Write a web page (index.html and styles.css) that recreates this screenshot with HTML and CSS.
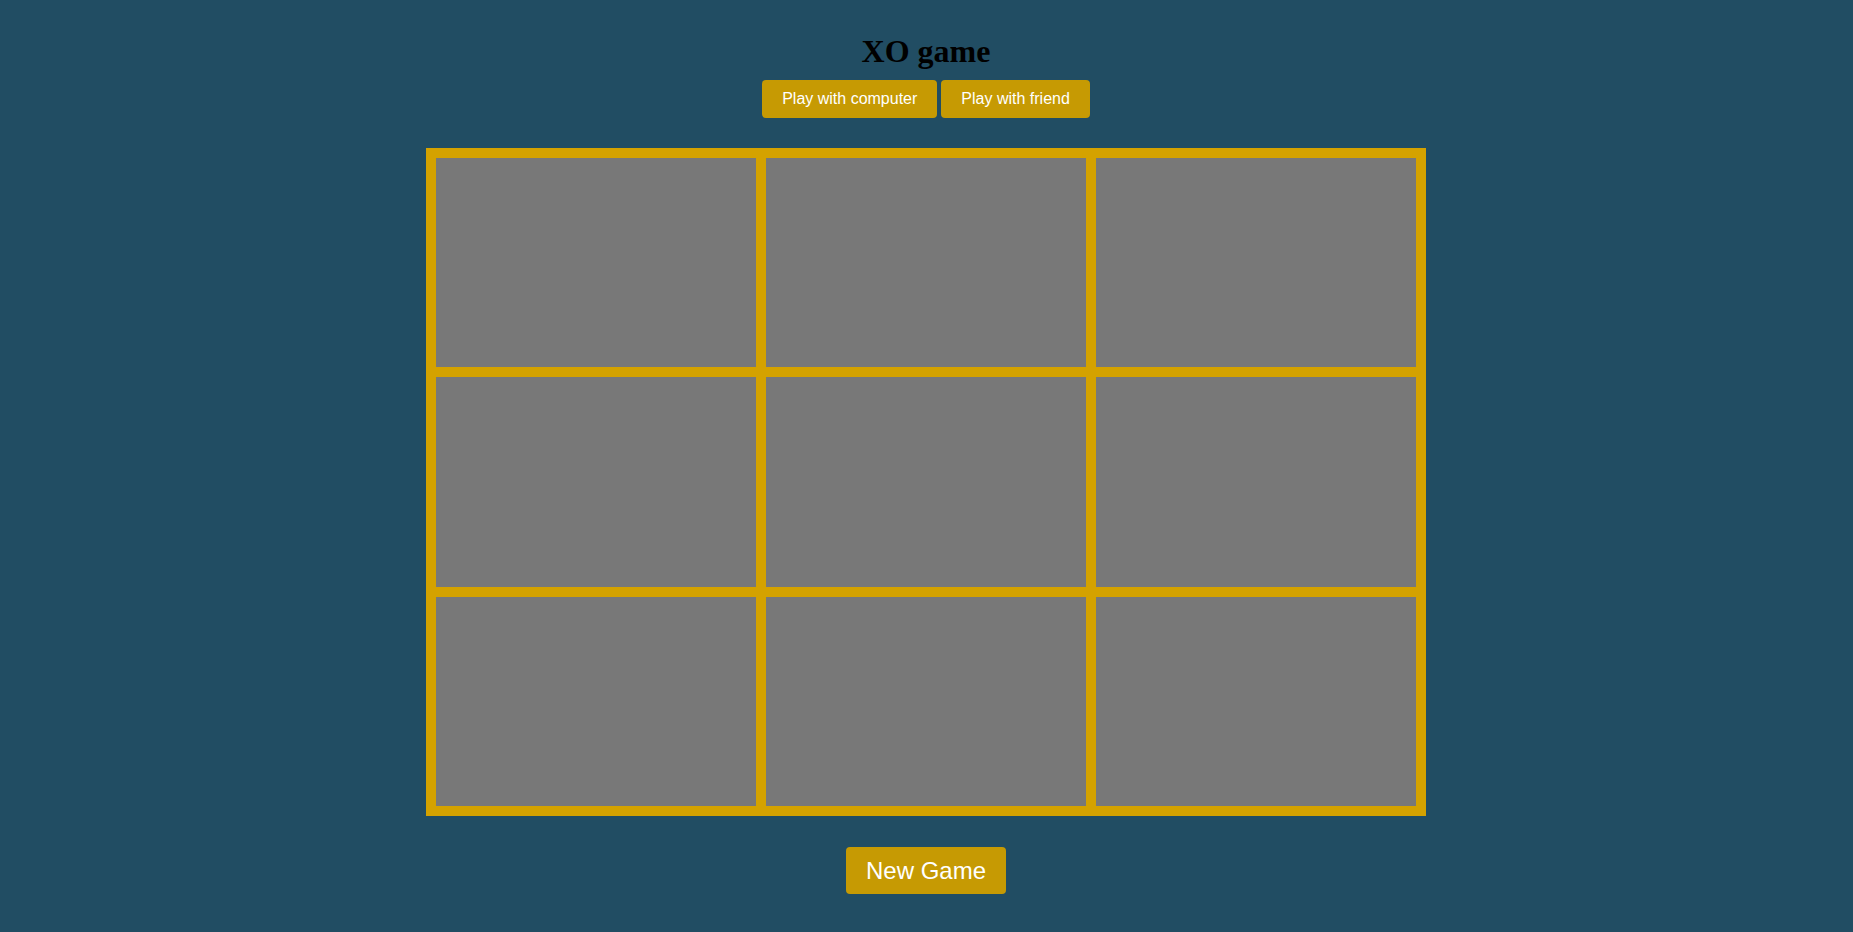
FILE: index.html
```html
<!DOCTYPE html>
<html lang="en">
<head>
<meta charset="utf-8">
<title>XO game</title>
<link rel="stylesheet" href="styles.css">
</head>
<body>
<div class="page">
  <h1 class="title">XO game</h1>
  <div class="modes">
    <button class="btn">Play with computer</button>
    <button class="btn">Play with friend</button>
  </div>
  <div class="board">
    <div class="cell"></div>
    <div class="cell"></div>
    <div class="cell"></div>
    <div class="cell"></div>
    <div class="cell"></div>
    <div class="cell"></div>
    <div class="cell"></div>
    <div class="cell"></div>
    <div class="cell"></div>
  </div>
  <button class="btn btn-big">New Game</button>
</div>
</body>
</html>
```

FILE: styles.css
```css
html, body {
  margin: 0;
  padding: 0;
  background: #214d63;
  height: 100%;
}
.page {
  display: flex;
  flex-direction: column;
  align-items: center;
  padding-top: 33px;
  padding-right: 1px;
}
.title {
  margin: 0 0 11px;
  font-family: "Liberation Serif", "Times New Roman", serif;
  font-size: 32px;
  line-height: 36px;
  font-weight: bold;
  color: #000;
}
.modes {
  display: flex;
  gap: 4px;
}
.btn {
  font-family: "Liberation Sans", Arial, sans-serif;
  font-size: 16px;
  line-height: 18px;
  padding: 10px 20px;
  border: none;
  border-radius: 4px;
  background: #c69a03;
  color: #fff;
  cursor: pointer;
}
.board {
  margin-top: 30px;
  box-sizing: border-box;
  width: 1000px;
  height: 668px;
  padding: 10px;
  background: #d4a200;
  display: grid;
  grid-template-columns: repeat(3, 1fr);
  grid-template-rows: repeat(3, 1fr);
  gap: 10px;
}
.cell {
  background: #787878;
}
.btn-big {
  margin-top: 31px;
  font-size: 24px;
  line-height: 27px;
}
```
